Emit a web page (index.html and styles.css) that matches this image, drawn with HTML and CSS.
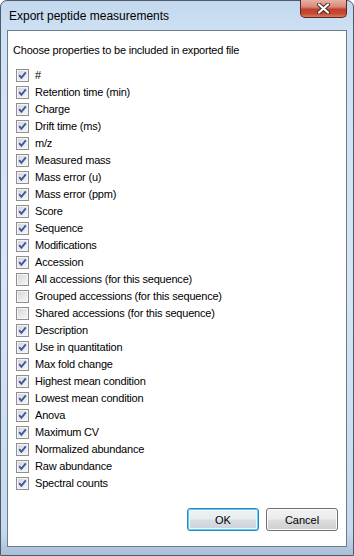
FILE: index.html
```html
<!DOCTYPE html>
<html>
<head>
    <title>Export peptide measurements</title>
    <link rel="stylesheet" href="styles.css">
</head>
<body>
    <div class="window">
        <div class="titlebar">
            <span class="title">Export peptide measurements</span>
            <div class="close-btn">
                <svg width="13" height="11" viewBox="0 0 13 11">
                    <path d="M2 1.5 L11 9.5 M11 1.5 L2 9.5" stroke="#3b2b2b" stroke-width="4" stroke-linecap="round"/>
                    <path d="M2 1.5 L11 9.5 M11 1.5 L2 9.5" stroke="#ffffff" stroke-width="2.2" stroke-linecap="round"/>
                </svg>
            </div>
        </div>

        <div class="client">
            <div class="intro">Choose properties to be included in exported file</div>

            <div class="prop-list" id="propList">
                <!-- Properties are rendered here -->
            </div>

            <div class="buttons">
                <button class="btn btn-default">OK</button>
                <button class="btn">Cancel</button>
            </div>
        </div>
    </div>

    <script>
        const properties = [
            ['#', true],
            ['Retention time (min)', true],
            ['Charge', true],
            ['Drift time (ms)', true],
            ['m/z', true],
            ['Measured mass', true],
            ['Mass error (u)', true],
            ['Mass error (ppm)', true],
            ['Score', true],
            ['Sequence', true],
            ['Modifications', true],
            ['Accession', true],
            ['All accessions (for this sequence)', false],
            ['Grouped accessions (for this sequence)', false],
            ['Shared accessions (for this sequence)', false],
            ['Description', true],
            ['Use in quantitation', true],
            ['Max fold change', true],
            ['Highest mean condition', true],
            ['Lowest mean condition', true],
            ['Anova', true],
            ['Maximum CV', true],
            ['Normalized abundance', true],
            ['Raw abundance', true],
            ['Spectral counts', true]
        ];

        const tick = '<svg width="11" height="11" viewBox="0 0 11 11"><path d="M2.2 5.2 L4.4 7.8 L8.8 2.4" fill="none" stroke="#3d56a0" stroke-width="1.9"/></svg>';

        function renderProperties() {
            const list = document.getElementById('propList');
            list.innerHTML = properties.map(([name, checked]) => `
                <div class="prop-row">
                    <span class="checkbox">${checked ? tick : ''}</span>
                    <span class="prop-name">${name}</span>
                </div>
            `).join('');
        }

        renderProperties();
    </script>
</body>
</html>
```

FILE: styles.css
```css
html, body {
    margin: 0;
    padding: 0;
}

body {
    font-family: "Liberation Sans", Arial, sans-serif;
    font-size: 11px;
    color: #000;
}

.window {
    width: 354px;
    height: 556px;
    box-sizing: border-box;
    border: 1px solid #4c5a6a;
    border-radius: 7px 7px 0 0;
    padding: 0 6px 8px 6px;
    display: flex;
    flex-direction: column;
    background: linear-gradient(to bottom, #c3d8ee 0%, #cfe1f4 6%, #d6e6f6 50%, #c6d9ee 96%, #a9bfd6 100%);
}

.titlebar {
    height: 29px;
    display: flex;
    align-items: flex-start;
    justify-content: space-between;
    padding-left: 2px;
}

.title {
    font-family: "Liberation Sans", Arial, sans-serif;
    font-size: 12px;
    line-height: 15px;
    margin-top: 8px;
    color: #000;
}

.close-btn {
    width: 47px;
    height: 18px;
    margin-top: -1px;
    box-sizing: border-box;
    border: 1px solid #5a2a22;
    border-top: none;
    border-radius: 0 0 5px 5px;
    background: linear-gradient(to bottom, #e8b0a4 0%, #d98a78 40%, #c1402a 55%, #c64a33 80%, #dc7a5e 100%);
    display: flex;
    align-items: center;
    justify-content: center;
}

.client {
    flex: 1;
    background: #fff;
    border: 1px solid #6c7c8d;
    display: flex;
    flex-direction: column;
    padding: 13px 8px 15px 5px;
    letter-spacing: -0.2px;
}

.intro {
    line-height: 13px;
}

.prop-list {
    margin-top: 10px;
    padding-left: 3px;
}

.prop-row {
    height: 17px;
    display: flex;
    align-items: center;
}

.checkbox {
    width: 13px;
    height: 13px;
    box-sizing: border-box;
    border: 1px solid #8e8f8f;
    background: linear-gradient(135deg, #cfd2d6 0%, #e6e7e9 50%, #f7f7f7 100%);
    box-shadow: inset 0 0 0 1px #f4f4f4;
    display: flex;
    align-items: center;
    justify-content: center;
    margin-right: 6px;
}

.checkbox svg {
    display: block;
}

.prop-name {
    line-height: 13px;
}

.buttons {
    margin-top: auto;
    display: flex;
    justify-content: flex-end;
    gap: 7px;
}

.btn {
    width: 72px;
    height: 23px;
    font-family: "Liberation Sans", Arial, sans-serif;
    font-size: 11px;
    color: #000;
    border: 1px solid #707070;
    border-radius: 3px;
    background: linear-gradient(to bottom, #f2f2f2 0%, #ebebeb 48%, #dddddd 52%, #cfcfcf 100%);
    box-shadow: inset 0 0 0 1px #fbfbfb;
    padding: 0;
}

.btn-default {
    border-color: #3c7fb1;
    box-shadow: inset 0 0 0 1px #48d8fb, inset 0 0 0 2px #eef8fd;
    background: linear-gradient(to bottom, #f0f3f5 0%, #e8ecef 48%, #d8dde2 52%, #ccd3d9 100%);
}
```
